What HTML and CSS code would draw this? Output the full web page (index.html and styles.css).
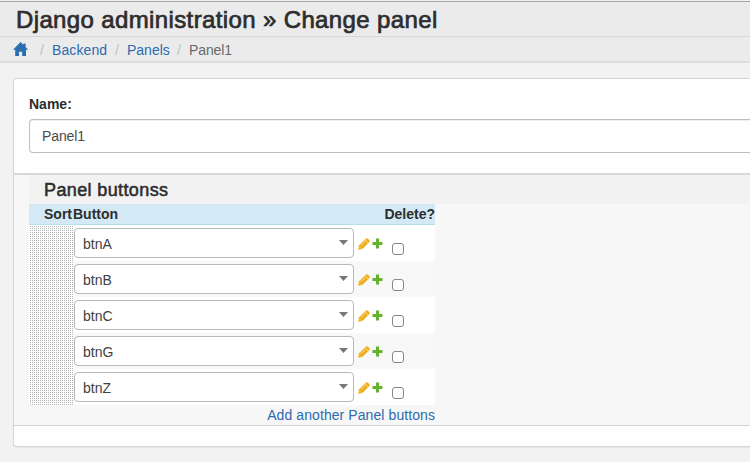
FILE: index.html
```html
<!DOCTYPE html>
<html lang="en">
<head>
<meta charset="utf-8">
<title>Change panel</title>
<link rel="stylesheet" href="styles.css">
</head>
<body>
<svg class="defs" width="0" height="0" aria-hidden="true">
  <symbol id="pencil" viewBox="0 0 12 12">
    <path fill="#efad1c" d="M.2 11.8.9 7.6 7.8.8Q8.9-.2 10 .8L11.2 2Q12.2 3.1 11.2 4.2L4.4 11Z"/>
    <path fill="none" stroke="#fff2bd" stroke-width=".7" d="M7.1 1.9 10.1 4.9M2.9 7.7 7.3 3.3M1.5 9.3 2.7 10.5"/>
  </symbol>
  <symbol id="plus" viewBox="0 0 11 11">
    <path fill="#64b22d" d="M4 .5h3V4h3.5v3H7v3.5H4V7H.5V4H4Z"/>
  </symbol>
</svg>
<header class="title"><h1>Django administration » Change panel</h1></header>
<nav class="crumbs">
  <a class="home" href="#" aria-label="Home"><svg width="16" height="15" viewBox="0 0 16 15"><path fill="#2a6fb0" d="M7.5 0 10.4 2.8V1.4H12.6v3.5L15.2 7.8H13V14H9.2V9.8H6V14H2.2V7.8H0Z"/></svg></a>
  <span class="sep">/</span><a class="backend" href="#">Backend</a>
  <span class="sep">/</span><a class="panels" href="#">Panels</a>
  <span class="sep">/</span><span class="current">Panel1</span>
</nav>
<main class="card">
  <div class="field">
    <label for="name">Name:</label>
    <input id="name" type="text" value="Panel1">
  </div>
  <section class="inline-group">
    <h2>Panel buttonss</h2>
    <div class="table">
      <div class="thead"><span class="sort">Sort</span><span class="button">Button</span><span class="delete">Delete?</span></div>
      <div class="row"><div class="grip"></div><div class="select"><span>btnA</span></div><svg class="pencil"><use href="#pencil"/></svg><svg class="plus"><use href="#plus"/></svg><i class="check"></i></div>
      <div class="row"><div class="grip"></div><div class="select"><span>btnB</span></div><svg class="pencil"><use href="#pencil"/></svg><svg class="plus"><use href="#plus"/></svg><i class="check"></i></div>
      <div class="row"><div class="grip"></div><div class="select"><span>btnC</span></div><svg class="pencil"><use href="#pencil"/></svg><svg class="plus"><use href="#plus"/></svg><i class="check"></i></div>
      <div class="row"><div class="grip"></div><div class="select"><span>btnG</span></div><svg class="pencil"><use href="#pencil"/></svg><svg class="plus"><use href="#plus"/></svg><i class="check"></i></div>
      <div class="row"><div class="grip"></div><div class="select"><span>btnZ</span></div><svg class="pencil"><use href="#pencil"/></svg><svg class="plus"><use href="#plus"/></svg><i class="check"></i></div>
      <div class="add"><a href="#">Add another Panel buttons</a></div>
    </div>
  </section>
</main>
</body>
</html>
```
FILE: styles.css
```css
* { box-sizing: border-box; }
body {
  margin: 0;
  height: 462px;
  overflow: hidden;
  background: #f2f2f2;
  color: #2d2d2d;
  font: 14px/20px "Liberation Sans", Arial, sans-serif;
}
.defs { display: block; }
a { color: #2d6aae; text-decoration: none; }
h1, h2 { margin: 0; font-weight: normal; }
.title {
  height: 36px;
  margin-top: 1px;
  border-top: 1px solid #a4a8a4;
  border-bottom: 1px solid #d6d6d6;
  padding-left: 16px;
  background: #ebebeb;
}
h1 {
  font-size: 24px;
  line-height: 36px;
  letter-spacing: .37px;
  white-space: nowrap;
  -webkit-text-stroke: .7px #2d2d2d;
}
.crumbs {
  display: flex;
  height: 26px;
  padding-left: 13px;
  border-bottom: 2px solid #dedede;
  background: #ebebeb;
  line-height: 26px;
}
.home { width: 16px; padding-top: 5px; line-height: 0; }
.sep { width: 20px; text-align: center; color: #c0c0c0; }
.home + .sep { width: 23px; padding-left: 3px; }
.backend { width: 55px; letter-spacing: .1px; }
.panels { width: 42px; }
.current { color: #6a6a6a; letter-spacing: -.1px; }
.card {
  height: 369px;
  margin: 15px 0 0 13px;
  border: 1px solid #d5d5d5;
  border-right: 0;
  border-radius: 4px 0 0 4px;
  background: #fff;
  box-shadow: 0 1px 1px rgba(0, 0, 0, .05);
}
.field { height: 94px; padding: 15px 0 0 15px; }
label { display: block; height: 25px; font-weight: bold; }
input {
  display: block;
  width: 100%;
  height: 34px;
  padding: 0 12px;
  border: 1px solid #bfbfbf;
  border-right: 0;
  border-radius: 4px 0 0 4px;
  color: #4a4a4a;
  font: inherit;
  letter-spacing: -.1px;
  box-shadow: inset 0 1px 1px rgba(0, 0, 0, .07);
}
.inline-group {
  height: 253px;
  padding-left: 15px;
  border-top: 2px solid #d8d8d8;
  border-bottom: 1px solid #d5d5d5;
  background: #f7f7f7;
}
h2 {
  height: 29px;
  padding-left: 15px;
  background: #f2f2f2;
  font-size: 18px;
  line-height: 30px;
  letter-spacing: .38px;
  -webkit-text-stroke: .55px #2d2d2d;
}
.table { width: 406px; }
.thead {
  display: flex;
  height: 21px;
  padding-left: 15px;
  border-bottom: 1px solid #b5e0e7;
  background: #d3e9f6;
  font-weight: bold;
}
.sort { width: 29px; }
.delete { margin-left: auto; }
.row { display: flex; height: 36px; background: #fff; }
.row:nth-child(odd) { background: #f8f8f8; }
.grip {
  width: 45px;
  background: conic-gradient(#b2b2b2 25%, #fff 0) 0 1px / 2px 2px;
}
.select {
  display: flex;
  justify-content: space-between;
  width: 280px;
  height: 30px;
  margin-top: 3px;
  padding: 0 5px 0 8px;
  border: 1px solid #b9b9b9;
  border-radius: 4px;
  background: #fff;
  color: #3f3f3f;
  line-height: 30px;
}
.select::after {
  content: "";
  width: 9px;
  height: 5px;
  margin-top: 11px;
  background: #777;
  clip-path: polygon(0 0, 100% 0, 50% 100%);
}
.pencil { width: 12px; height: 12px; margin: 13px 0 0 4px; }
.plus { width: 11px; height: 11px; margin: 13px 0 0 2px; }
.check {
  width: 12px;
  height: 12px;
  margin: 18px 0 0 9px;
  border: 1px solid #888;
  border-radius: 3px;
  background: #fff;
}
.add { text-align: right; letter-spacing: .08px; }
```
